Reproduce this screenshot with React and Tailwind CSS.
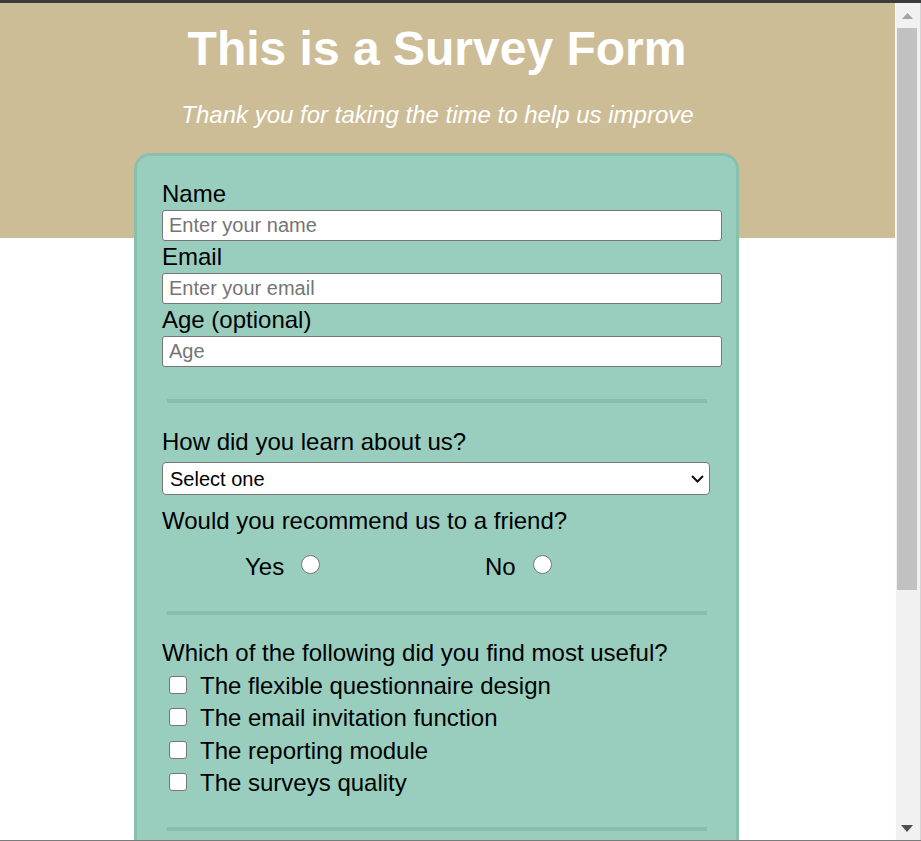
import { useState } from "react";

const USEFUL = [
  "The flexible questionnaire design",
  "The email invitation function",
  "The reporting module",
  "The surveys quality",
];

function Divider({ className = "" }) {
  return <div className={`ml-[5px] h-[4px] w-[540px] bg-[#88bdab] ${className}`} />;
}

function TextField({ label, placeholder, type = "text" }) {
  return (
    <label className="block">
      <span className="block text-[24px] leading-[32px] text-black">{label}</span>
      <input
        type={type}
        placeholder={placeholder}
        className="block h-[31px] w-[560px] rounded-[3px] border border-[#767676] bg-white px-[6px] text-[20px] text-black outline-none placeholder:text-[#757575]"
      />
    </label>
  );
}

function Scrollbar() {
  return (
    <div className="flex w-[26px] shrink-0 flex-col border-l border-[#fbfbfb] border-r border-r-[#d4d4d4] bg-[#f1f1f1]">
      <div className="flex h-[25px] items-center justify-center pr-[2px]">
        <svg width="11" height="6" viewBox="0 0 11 6">
          <polygon points="5.5,0 11,6 0,6" fill="#a3a3a3" />
        </svg>
      </div>
      <div className="ml-[1px] h-[562px] w-[20px] bg-[#c1c1c1]" />
      <div className="flex-1" />
      <div className="flex h-[25px] items-center justify-center pr-[2px] pt-[2px]">
        <svg width="12" height="7" viewBox="0 0 12 7">
          <polygon points="0,0 12,0 6,7" fill="#505050" />
        </svg>
      </div>
    </div>
  );
}

export default function App() {
  const [recommend, setRecommend] = useState("");
  const [checked, setChecked] = useState([]);

  const toggle = (item) =>
    setChecked((prev) =>
      prev.includes(item) ? prev.filter((i) => i !== item) : [...prev, item]
    );

  return (
    <div className="flex h-[841px] w-[921px] flex-col overflow-hidden bg-white font-['Liberation_Sans',Arial,sans-serif]">
      <div className="h-[3px] shrink-0 bg-[#3b3b3b]" />

      <div className="flex min-h-0 flex-1">
        <main className="min-w-0 flex-1 overflow-hidden bg-white">
          <header className="h-[235px] bg-[#cdbd97] pt-[18px] text-center text-white">
            <h1 className="pr-[21px] text-[48px] font-bold leading-[56px]">This is a Survey Form</h1>
            <p className="mt-[24px] pr-[20px] text-[24px] italic leading-[28px]">
              Thank you for taking the time to help us improve
            </p>
          </header>

          <form
            className="relative -mt-[85px] ml-[134px] w-[605px] rounded-t-[16px] border-[3px] border-[#88c0ae] bg-[#99cebe] pb-[200px] pl-[25px] pt-[22px] text-black"
            onSubmit={(e) => e.preventDefault()}
          >
            <TextField label="Name" placeholder="Enter your name" />
            <TextField label="Email" placeholder="Enter your email" type="email" />
            <TextField label="Age (optional)" placeholder="Age" type="number" />

            <Divider className="mt-[32px]" />

            <label className="mt-[23px] block">
              <span className="block text-[24px] leading-[32px]">How did you learn about us?</span>
              <div className="relative mt-[4px] w-[548px]">
                <select className="block h-[33px] w-full appearance-none rounded-[4px] border border-[#767676] bg-white px-[7px] text-[20px] text-black outline-none">
                  <option>Select one</option>
                  <option>Search engine</option>
                  <option>Social media</option>
                  <option>A friend</option>
                  <option>Other</option>
                </select>
                <svg
                  width="13"
                  height="8"
                  viewBox="0 0 13 8"
                  fill="none"
                  className="pointer-events-none absolute right-[6px] top-[13px]"
                >
                  <path d="M1 1l5.5 5.5L12 1" stroke="#111" strokeWidth="2" />
                </svg>
              </div>
            </label>

            <p className="mt-[10px] text-[24px] leading-[32px]">Would you recommend us to a friend?</p>

            <div className="mt-[14px] flex pl-[83px] text-[24px] leading-[32px]">
              {["Yes", "No"].map((opt) => (
                <label key={opt} className="flex w-[240px] items-start gap-[17px]">
                  <span>{opt}</span>
                  <input
                    type="radio"
                    name="recommend"
                    checked={recommend === opt}
                    onChange={() => setRecommend(opt)}
                    className="mt-[4px] h-[19px] w-[19px] appearance-none rounded-full border border-[#767676] bg-white checked:border-[6px] checked:border-[#1a73e8]"
                  />
                </label>
              ))}
            </div>

            <Divider className="mt-[28px]" />

            <p className="mt-[22px] text-[24px] leading-[32px]">
              Which of the following did you find most useful?
            </p>
            <div className="mt-[1px] flex flex-col">
              {USEFUL.map((item) => (
                <label key={item} className="flex items-start gap-[13px] pl-[7px] text-[24px] leading-[32.3px]">
                  <input
                    type="checkbox"
                    checked={checked.includes(item)}
                    onChange={() => toggle(item)}
                    className="mt-[6px] h-[18px] w-[18px] shrink-0 appearance-none rounded-[3px] border border-[#767676] bg-white checked:bg-[#1a73e8]"
                  />
                  <span>{item}</span>
                </label>
              ))}
            </div>

            <Divider className="mt-[28px]" />
          </form>
        </main>

        <Scrollbar />
      </div>

      <div className="h-[1px] shrink-0 bg-[#7b7b7b]" />
    </div>
  );
}
